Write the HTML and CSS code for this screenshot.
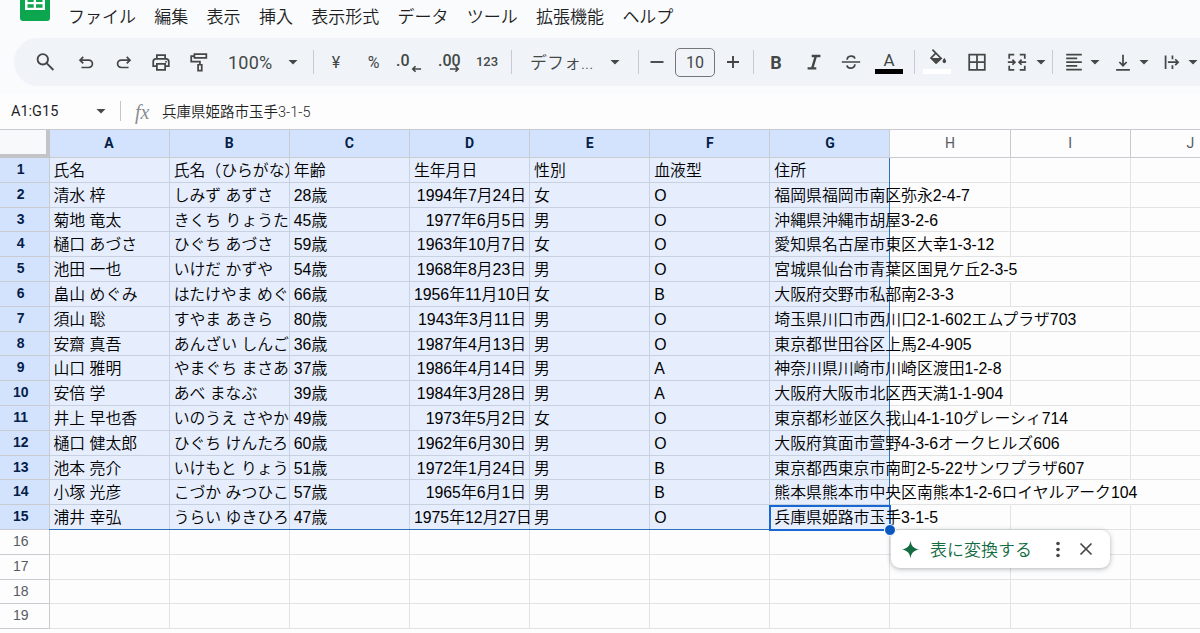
FILE: index.html
```html
<!DOCTYPE html>
<html lang="ja">
<head>
    <meta charset="UTF-8">
    <meta name="viewport" content="width=device-width, initial-scale=1.0">
    <title>スプレッドシート</title>
    <link rel="stylesheet" href="styles.css">
</head>
<body>
    <!-- ヘッダー -->
    <header class="header">
        <div class="menubar">
            <svg class="logo" width="30" height="40" viewBox="0 0 30 40">
                <rect width="30" height="40" rx="3" fill="#0ca64e"/>
                <path d="M5 15h20v14H5zM7.500 17v4h6.200v-4zM16 17v4h6.500v-4zM7.500 23.200v3.600h6.200v-3.600zM16 23.200v3.600h6.500v-3.600z" fill="#fff" fill-rule="evenodd"/>
            </svg>
            <nav class="menu">
                <span>ファイル</span>
                <span>編集</span>
                <span>表示</span>
                <span>挿入</span>
                <span>表示形式</span>
                <span>データ</span>
                <span>ツール</span>
                <span>拡張機能</span>
                <span>ヘルプ</span>
            </nav>
        </div>

        <!-- ツールバー -->
        <div class="toolbar">
            <div class="tool search"><svg viewBox="0 0 24 24"><circle cx="9.800" cy="9.300" r="5.200"/><path d="M13.600 13.200l6.800 6.800"/></svg></div>
            <div class="tool"><svg viewBox="0 0 24 24"><path d="M9 6.500L5.500 10 9 13.500M6 10h9a4 4 0 0 1 0 8H7"/></svg></div>
            <div class="tool narrow"><svg viewBox="0 0 24 24"><path d="M15 6.500l3.500 3.500-3.500 3.500M18 10H9a4 4 0 0 0 0 8h8"/></svg></div>
            <div class="tool"><svg viewBox="0 0 24 24"><path d="M7.500 8.500V4.500h9v4M7 16.500H3.500v-5a3 3 0 0 1 3-3h11a3 3 0 0 1 3 3v5H17M7.500 14h9v6.500h-9z"/><circle class="solid" cx="17.500" cy="11.700" r="1"/></svg></div>
            <div class="tool"><svg viewBox="0 0 24 24"><path d="M7 3.500h13v4H7zM7 5.500H3.500V11.500h9.500V15M11 15h4v6.500h-4z"/></svg></div>
            <div class="zoom-level"><span>100%</span><i class="arrow"></i></div>
            <div class="sep sep-format"></div>
            <div class="tool txt">¥</div>
            <div class="tool narrow txt">%</div>
            <div class="tool decimal"><span>.0</span><svg viewBox="0 0 12 8"><path d="M11 4H2M5 1L2 4l3 3"/></svg></div>
            <div class="tool decimal more"><span>.00</span><svg viewBox="0 0 12 8"><path d="M1 4h9M7 1l3 3-3 3"/></svg></div>
            <div class="tool digits">123</div>
            <div class="sep sep-font"></div>
            <div class="font-name"><span>デフォ...</span><i class="arrow"></i></div>
            <div class="sep sep-size"></div>
            <div class="size">
                <svg viewBox="0 0 18 18"><path d="M2.500 9h13"/></svg>
                <div class="size-box">10</div>
                <svg viewBox="0 0 18 18"><path d="M3 9h12M9 3v12"/></svg>
            </div>
            <div class="sep sep-style"></div>
            <div class="tool bold">B</div>
            <div class="tool narrow"><svg viewBox="0 0 24 24"><path class="heavy" d="M9.500 5.500h9.500M5 19h9.500M14 5.500l-4 13.500"/></svg></div>
            <div class="tool"><svg viewBox="0 0 24 24"><path d="M2 12h20M7.800 9.500c0-5.300 8-5 8.400-1.200M16.200 14.500c0 5.300-8.200 5.200-8.600 1.200"/></svg></div>
            <div class="tool color"><span>A</span><i class="bar"></i></div>
            <div class="sep sep-fill"></div>
            <div class="tool color">
                <svg viewBox="0 0 24 20"><path d="M7 1.500l9.500 9.500-5.500 5L5.500 10.500 11 5"/><path class="solid" d="M5.500 10.500h11L11 16zM20 10.500s-2 2.400-2 3.700a2 2 0 0 0 4 0c0-1.300-2-3.700-2-3.700z"/></svg>
                <i class="bar white"></i>
            </div>
            <div class="tool borders"><svg viewBox="0 0 24 24"><path d="M3.500 4h17v16.500H3.500zM12 4v16.500M3.500 12.200h17"/></svg></div>
            <div class="tool"><svg viewBox="0 0 24 24"><path d="M9 4H3.500V8.500M3.500 16V20.500H9M15 4h5.500V8.500M20.500 16V20.500H15M2 12.200h7.500M7 9.500l2.700 2.700L7 15M22 12.200h-7.500M17 9.500l-2.700 2.700L17 15"/></svg></div>
            <i class="arrow"></i>
            <div class="sep sep-align"></div>
            <div class="dropdown"><svg viewBox="0 0 20 24"><path d="M1.500 4h17M1.500 8.100h12M1.500 12.200h17M1.500 16.300h12M1.500 20.400h17"/></svg><i class="arrow"></i></div>
            <div class="dropdown"><svg viewBox="0 0 20 24"><path d="M2.500 20.500h15M10 4v11.500M6 12l4 4 4-4"/></svg><i class="arrow"></i></div>
            <div class="dropdown"><svg viewBox="0 0 20 24"><path d="M3 5v14.500M10.500 5v4M10.500 15.500v4M5.500 12.200h11M13.500 9l3.200 3.200-3.200 3.200"/></svg><i class="arrow"></i></div>
        </div>
    </header>

    <!-- 数式バー -->
    <div class="formula-bar">
        <div class="name-box"><span>A1:G15</span><i class="arrow"></i></div>
        <span class="fx">fx</span>
        <span class="formula">兵庫県姫路市玉手3-1-5</span>
    </div>

    <!-- シート本体 -->
    <main class="sheet">
        <div class="grid" id="grid"></div>
        <div class="selection">
            <div class="active-cell"></div>
            <div class="handle"></div>
        </div>
        <div class="suggestion">
            <svg class="spark" viewBox="0 0 20 20"><path d="M10 0.500C10.800 6.500 13.500 9.200 19.500 10 13.500 10.800 10.800 13.500 10 19.500 9.200 13.500 6.500 10.800 0.500 10 6.500 9.200 9.200 6.500 10 0.500z"/></svg>
            <span class="label">表に変換する</span>
            <svg class="dots" viewBox="0 0 6 18"><circle cx="3" cy="2.700" r="1.900"/><circle cx="3" cy="9" r="1.900"/><circle cx="3" cy="15.300" r="1.900"/></svg>
            <svg class="close" viewBox="0 0 14 14"><path d="M1.500 1.500l11 11M12.500 1.500l-11 11"/></svg>
        </div>
    </main>

    <script src="sheet.js"></script>
</body>
</html>
```
FILE: styles.css
```css
* {
    margin: 0;
    padding: 0;
    box-sizing: border-box;
}

body {
    width: 1200px;
    height: 633px;
    overflow: hidden;
    background: #fdfdfe;
    color: #1f1f1f;
    font-family: "Liberation Sans", "Noto Sans CJK JP", sans-serif;
}

svg {
    display: block;
    flex: none;
    fill: none;
    stroke: #444746;
    stroke-width: 1.9;
}

/* ヘッダー */
.header {
    height: 93px;
    background: #f9fbfd;
    overflow: hidden;
}

.menubar {
    display: flex;
    height: 38px;
    padding-left: 20px;
}

.logo {
    margin-top: -19px;
    stroke: none;
}

.menu {
    display: flex;
    gap: 18.300px;
    padding-left: 18px;
    font-family: "Noto Sans CJK JP", sans-serif;
    font-size: 17px;
    font-weight: 350;
    line-height: 32px;
    white-space: nowrap;
}

/* ツールバー */
.toolbar {
    display: flex;
    align-items: center;
    width: 1230px;
    height: 48px;
    margin-left: 14px;
    padding-left: 12px;
    border-radius: 24px;
    background: #f0f4f9;
    color: #444746;
    font-family: Roboto, "Noto Sans CJK JP", sans-serif;
}

.toolbar > * {
    flex: none;
}

.tool {
    display: flex;
    align-items: center;
    justify-content: center;
    width: 38px;
    height: 38px;
}

.tool svg {
    width: 22px;
    height: 22px;
}

.tool.search {
    margin-right: 3px;
}

.tool.search svg {
    width: 24px;
    height: 24px;
}

.tool.narrow {
    width: 37px;
}

.tool.borders {
    margin: 0 2px;
}

.solid {
    fill: #444746;
    stroke: none;
}

.heavy {
    stroke-width: 2.6;
}

.arrow {
    display: block;
    flex: none;
    width: 10px;
    height: 5px;
    background: #444746;
    clip-path: polygon(0 0, 100% 0, 50% 100%);
}

.zoom-level {
    display: flex;
    align-items: center;
    justify-content: space-between;
    width: 80px;
    padding-left: 10px;
    font-size: 18px;
    letter-spacing: 0.200px;
}

.sep {
    width: 1px;
    height: 24px;
    background: #c7cbd1;
}

.sep-format { margin: 0 3px 0 15px; }
.sep-font { margin: 0 18px 0 5px; }
.sep-size { margin: 0 9px 0 18px; }
.sep-style { margin: 0 3px 0 11px; }
.sep-fill { margin: 0 3px 0 6px; }
.sep-align { margin: 0 11px 0 6px; }

.txt {
    font-size: 16px;
}

.decimal {
    position: relative;
    padding: 0 0 4px 4px;
    justify-content: flex-start;
    font-size: 16px;
    font-weight: 500;
}

.decimal.more {
    padding-left: 8px;
}

.decimal svg {
    position: absolute;
    left: 19px;
    top: 22px;
    width: 11px;
    height: 8px;
}

.digits {
    padding-bottom: 1px;
    font-size: 13px;
    font-weight: 500;
}

.font-name {
    display: flex;
    align-items: center;
    justify-content: space-between;
    width: 90px;
    font-size: 17px;
    font-weight: 350;
}

.font-name span {
    margin-top: -2px;
}

.size {
    display: flex;
    align-items: center;
    gap: 9px;
}

.size svg {
    width: 18px;
    height: 18px;
}

.size-box {
    width: 40px;
    height: 29px;
    border: 1px solid #747775;
    border-radius: 5px;
    font-size: 16px;
    line-height: 27px;
    text-align: center;
}

.bold {
    font-size: 18px;
    font-weight: 700;
}

.color {
    flex-direction: column;
    justify-content: flex-end;
    padding-bottom: 7px;
    font-size: 17px;
    line-height: 18px;
}

.color svg {
    width: 22px;
    height: 19px;
    margin-bottom: 2px;
}

.bar {
    width: 28px;
    height: 5px;
    background: #000;
}

.bar.white {
    background: #fff;
}

.dropdown {
    display: flex;
    align-items: center;
    gap: 6px;
    margin-right: 13px;
}

.dropdown svg {
    width: 20px;
    height: 22px;
}

/* 数式バー */
.formula-bar {
    display: flex;
    align-items: center;
    height: 37px;
    border-bottom: 1px solid #c7cad0;
}

.name-box {
    display: flex;
    align-items: center;
    justify-content: space-between;
    width: 121px;
    height: 20px;
    padding: 0 14px 0 11px;
    border-right: 1px solid #c7c7c7;
    font-family: Roboto, sans-serif;
    font-size: 14.500px;
}

.fx {
    width: 27px;
    margin-left: 14px;
    padding-top: 2px;
    color: #8a8d91;
    font-family: "Liberation Serif", serif;
    font-size: 20px;
    font-style: italic;
}

.formula {
    padding-bottom: 2px;
    font-family: Roboto, "Noto Sans CJK JP", sans-serif;
    font-size: 14.500px;
    font-weight: 350;
}

/* シート */
.sheet {
    position: relative;
    height: 503px;
    overflow: hidden;
}

.grid {
    display: grid;
    grid-template-columns: 49.500px repeat(10, 120.150px);
    grid-template-rows: 28px;
    grid-auto-rows: 24.800px;
}

.corner {
    background: #f8f9fa;
    border: solid #c2c4c7;
    border-width: 0 4px 4px 0;
}

.col-head,
.row-head {
    border: solid #c8cbd0;
    border-width: 0 1px 1px 0;
    color: #575b5f;
    font-size: 14px;
    text-align: center;
}

.col-head {
    font-family: Roboto, sans-serif;
    line-height: 27px;
}

.row-head {
    padding-right: 7px;
    line-height: 23px;
}

.col-head.selected,
.row-head.selected {
    background: #d3e3fd;
    color: #041e49;
    font-weight: 700;
}

.cell {
    border: solid #e1e3e5;
    border-width: 0 1px 1px 0;
    padding-left: 4px;
    color: #000;
    font-size: 15.850px;
    font-weight: 350;
    line-height: 25px;
    white-space: nowrap;
}

.cell.selected {
    background: #e6eefd;
    border-color: #c8d1df;
}

.cell.clip {
    overflow: hidden;
}

.cell.date {
    padding-right: 3px;
    text-align: right;
}

.cell.covered {
    border-right-color: transparent;
}

.cell span {
    position: relative;
    z-index: 1;
}

/* 選択範囲の枠 */
.selection {
    position: absolute;
    left: 49px;
    top: 28px;
    width: 841px;
    height: 372px;
    border: solid #2a72c0;
    border-width: 0 1px 1px 0;
}

.active-cell {
    position: absolute;
    right: -2px;
    bottom: -2px;
    width: 122px;
    height: 26px;
    border: 2px solid #1967d2;
}

.handle {
    position: absolute;
    z-index: 2;
    right: -7px;
    bottom: -7px;
    width: 12px;
    height: 12px;
    border: 1px solid #fff;
    border-radius: 50%;
    background: #0b57c0;
}

/* 変換の提案 */
.suggestion {
    position: absolute;
    z-index: 1;
    left: 891px;
    top: 400px;
    display: flex;
    align-items: center;
    width: 219px;
    height: 38px;
    padding-left: 10px;
    border-radius: 9px;
    background: #fff;
    box-shadow: 0 1px 5px rgba(60, 64, 67, 0.4);
    color: #146c43;
    font-family: "Noto Sans CJK JP", sans-serif;
    font-size: 17px;
    font-weight: 350;
    white-space: nowrap;
}

.spark {
    width: 19px;
    height: 19px;
    margin-right: 10px;
    fill: #146c43;
    stroke: none;
}

.label {
    margin-top: -2px;
}

.dots {
    width: 6px;
    height: 17px;
    margin: 0 18px 0 23px;
    fill: #444746;
    stroke: none;
}

.close {
    width: 14px;
    height: 14px;
    stroke-width: 1.7;
}
```
FILE: sheet.js
```js
const columns = ['A', 'B', 'C', 'D', 'E', 'F', 'G', 'H', 'I', 'J'];
const selectedCols = 7;
const rowCount = 19;

const rows = [
    ['氏名', '氏名（ひらがな）', '年齢', '生年月日', '性別', '血液型', '住所'],
    ['清水 梓', 'しみず あずさ', '28歳', '1994年7月24日', '女', 'O', '福岡県福岡市南区弥永2-4-7'],
    ['菊地 竜太', 'きくち りょうた', '45歳', '1977年6月5日', '男', 'O', '沖縄県沖縄市胡屋3-2-6'],
    ['樋口 あづさ', 'ひぐち あづさ', '59歳', '1963年10月7日', '女', 'O', '愛知県名古屋市東区大幸1-3-12'],
    ['池田 一也', 'いけだ かずや', '54歳', '1968年8月23日', '男', 'O', '宮城県仙台市青葉区国見ケ丘2-3-5'],
    ['畠山 めぐみ', 'はたけやま めぐ', '66歳', '1956年11月10日', '女', 'B', '大阪府交野市私部南2-3-3'],
    ['須山 聡', 'すやま あきら', '80歳', '1943年3月11日', '男', 'O', '埼玉県川口市西川口2-1-602エムプラザ703'],
    ['安齋 真吾', 'あんざい しんご', '36歳', '1987年4月13日', '男', 'O', '東京都世田谷区上馬2-4-905'],
    ['山口 雅明', 'やまぐち まさあ', '37歳', '1986年4月14日', '男', 'A', '神奈川県川崎市川崎区渡田1-2-8'],
    ['安倍 学', 'あべ まなぶ', '39歳', '1984年3月28日', '男', 'A', '大阪府大阪市北区西天満1-1-904'],
    ['井上 早也香', 'いのうえ さやか', '49歳', '1973年5月2日', '女', 'O', '東京都杉並区久我山4-1-10グレーシィ714'],
    ['樋口 健太郎', 'ひぐち けんたろ', '60歳', '1962年6月30日', '男', 'O', '大阪府箕面市萱野4-3-6オークヒルズ606'],
    ['池本 亮介', 'いけもと りょう', '51歳', '1972年1月24日', '男', 'B', '東京都西東京市南町2-5-22サンワプラザ607'],
    ['小塚 光彦', 'こづか みつひこ', '57歳', '1965年6月1日', '男', 'B', '熊本県熊本市中央区南熊本1-2-6ロイヤルアーク104'],
    ['浦井 幸弘', 'うらい ゆきひろ', '47歳', '1975年12月27日', '男', 'O', '兵庫県姫路市玉手3-1-5']
];

const grid = document.getElementById('grid');

function addCell(className, text) {
    const el = document.createElement('div');
    el.className = className;
    if (text) {
        const span = document.createElement('span');
        span.textContent = text;
        el.appendChild(span);
    }
    grid.appendChild(el);
    return el;
}

// 列見出し
addCell('corner');
columns.forEach((name, c) => {
    addCell('col-head' + (c < selectedCols ? ' selected' : ''), name);
});

for (let r = 0; r < rowCount; r++) {
    const data = rows[r];
    addCell('row-head' + (data ? ' selected' : ''), String(r + 1));

    const cells = columns.map((name, c) => {
        let className = 'cell';
        if (data && c < selectedCols) className += ' selected';
        if (c === 1) className += ' clip';
        if (c === 3 && r > 0) className += ' date';
        return addCell(className, data ? data[c] : '');
    });

    // 住所がはみ出したセルの縦線を消す
    if (data) {
        const end = cells[6].firstChild.getBoundingClientRect().right;
        for (let c = 7; c < cells.length; c++) {
            if (end > cells[c].getBoundingClientRect().right) {
                cells[c].classList.add('covered');
            }
        }
    }
}
```
